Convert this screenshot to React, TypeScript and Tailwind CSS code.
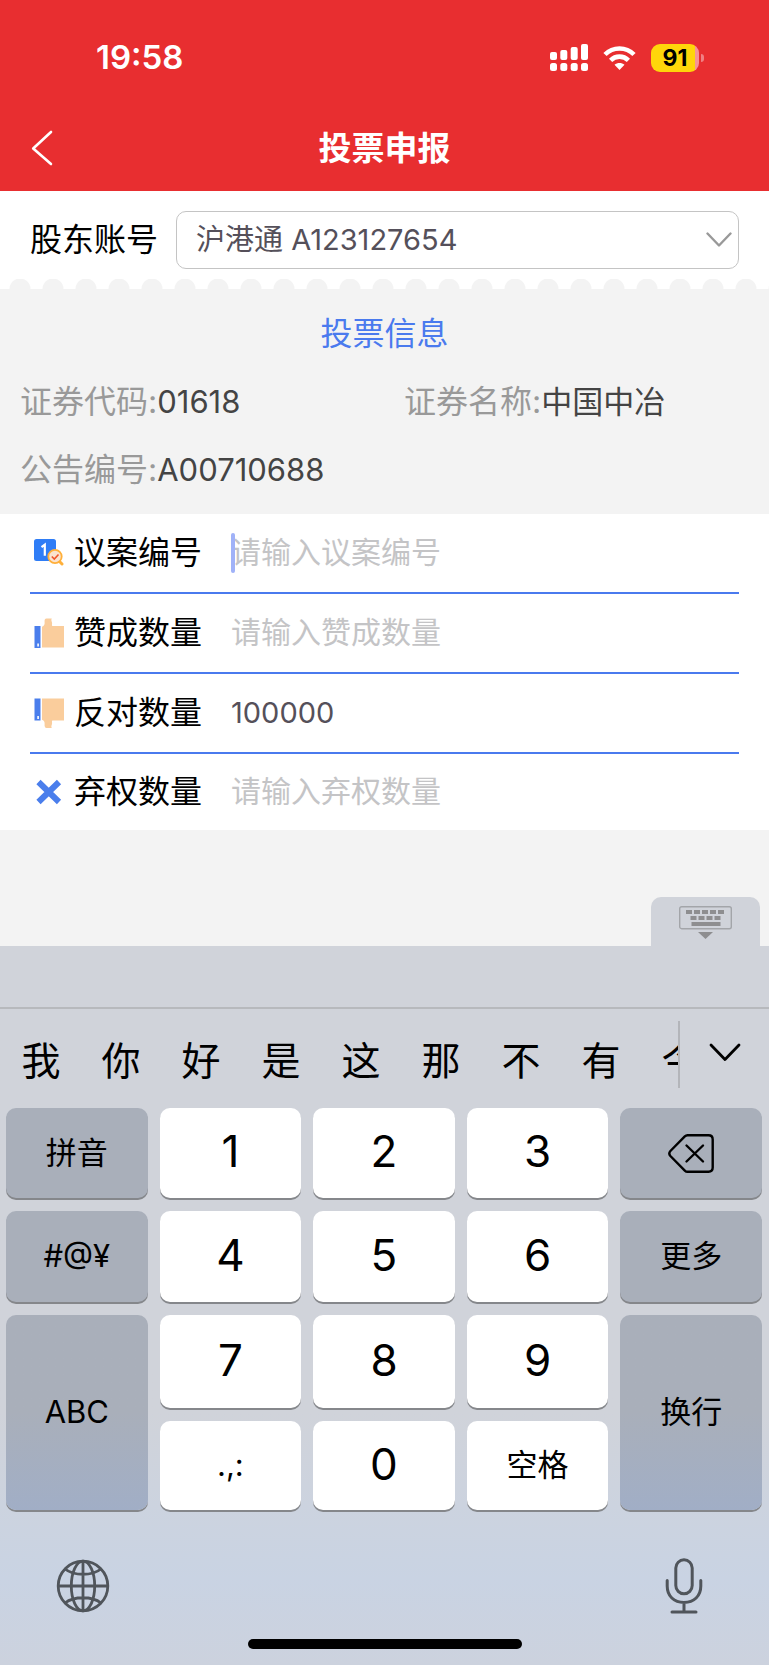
import { useState } from "react";
import type { ReactNode } from "react";
import clsx from "clsx";

function SignalIcon() {
  return (
    <svg width="38" height="28" viewBox="0 0 38 28" fill="currentColor">
      <rect x="0" y="8" width="7" height="8" rx="2" />
      <rect x="10.300" y="6" width="7" height="10" rx="2" />
      <rect x="20.700" y="3" width="7" height="13" rx="2" />
      <rect x="31" y="0" width="7" height="16" rx="2" />
      <rect x="0" y="19" width="7" height="8" rx="2.500" />
      <rect x="10.300" y="19" width="7" height="8" rx="2.500" />
      <rect x="20.700" y="19" width="7" height="8" rx="2.500" />
      <rect x="31" y="19" width="7" height="8" rx="2.500" />
    </svg>
  );
}

function WifiIcon() {
  return (
    <svg width="33" height="24" viewBox="0 0 33 24" fill="none" stroke="currentColor" strokeWidth="4.600">
      <path d="M2 8.500C10 0.400 23 0.400 31 8.500" />
      <path d="M7.600 14.300C12.600 9.400 20.400 9.400 25.400 14.300" />
      <path d="M16.500 24L11.500 18.800C14.400 16.400 18.600 16.400 21.500 18.800Z" fill="currentColor" stroke="none" />
    </svg>
  );
}

function BatteryIcon() {
  return (
    <div className="flex items-center gap-0.5">
      <div className="flex h-7 w-12 items-center justify-center rounded-[9px] bg-linear-to-r from-[#ffd60a] from-92% to-[#f69496] to-92% text-[23px] leading-7 font-bold text-black">
        91
      </div>
      <div className="h-2 w-[3px] rounded-r-full bg-[#f08083]" />
    </div>
  );
}

function BallotIcon() {
  return (
    <svg width="30" height="30" viewBox="0 0 30 30" fill="none">
      <rect x="0" y="1" width="22" height="22" rx="2.500" fill="#2f7df6" />
      <path d="M7.500 9.200L10.800 6.700V17.800" stroke="#fff" strokeWidth="2.200" />
      <path d="M24.500 22.500L28 26" stroke="#ffb03a" strokeWidth="3" strokeLinecap="round" />
      <circle cx="21" cy="18.500" r="6.700" fill="#fbe3cf" stroke="#ffb03a" strokeWidth="1.800" />
      <path d="M17.800 18.500L20.300 21L24.500 16.500" stroke="#f0552b" strokeWidth="1.600" />
    </svg>
  );
}

function ThumbUpIcon() {
  return (
    <svg width="30" height="30" viewBox="0 0 30 30">
      <rect x="0.500" y="8" width="6" height="22" fill="#4a7eec" />
      <rect x="3.300" y="25.500" width="1.600" height="3" fill="#fff" />
      <path
        d="M8 8.800C10.200 8 10.800 6.500 10.600 4.200C10.400 2.200 10.900 0.500 12.500 0.500H17.800C16.900 2 17.600 3.200 18 4.500C18.400 6 17.500 7 18.300 8H30V29.500H8Z"
        fill="#facd9c"
      />
    </svg>
  );
}

function ThumbDownIcon() {
  return (
    <svg width="30" height="30" viewBox="0 0 30 30">
      <rect x="0.500" y="0.500" width="6" height="22" fill="#4a7eec" />
      <rect x="3.300" y="18" width="1.600" height="3" fill="#fff" />
      <path
        d="M8 21.700C10.200 22.500 10.800 24 10.600 26.300C10.400 28.300 10.900 30 12.500 30H17.800C16.900 28.500 17.600 27.300 18 26C18.400 24.500 17.500 23.500 18.300 22.500H30V0.500H8Z"
        fill="#facd9c"
      />
    </svg>
  );
}

function CrossIcon() {
  return (
    <svg width="30" height="30" viewBox="0 0 30 30" stroke="#4a7eec" strokeWidth="6">
      <path d="M4.500 5L25 25M25 5L4.500 25" />
    </svg>
  );
}

function HideKeyboardIcon() {
  const top = [7, 15, 23, 31, 39];
  const middle = [12, 20, 28, 36];
  return (
    <svg width="53" height="34" viewBox="0 0 53 34" fill="#8e8e90">
      <rect x="0.700" y="0.700" width="51.600" height="22" rx="2" fill="none" stroke="#a3a5a9" strokeWidth="1.400" />
      {top.map((x) => (
        <rect key={x} x={x} y="4" width="6" height="4" />
      ))}
      {middle.map((x) => (
        <rect key={x} x={x - 0.5} y="10" width="6" height="4" />
      ))}
      <rect x="12.500" y="16" width="29" height="4" />
      <path d="M19 26H34L26.500 33Z" />
    </svg>
  );
}

function DeleteIcon() {
  return (
    <svg width="46" height="39" viewBox="0 0 46 39" fill="none" stroke="#000" strokeWidth="2.400" strokeLinecap="round" strokeLinejoin="round">
      <path d="M19.500 1.200H40.500Q44.700 1.200 44.700 5.400V33.600Q44.700 37.800 40.500 37.800H19.500Q18 37.800 16.800 36.600L2.400 22Q0.200 19.500 2.400 17L16.800 2.400Q18 1.200 19.500 1.200Z" />
      <path d="M18.500 11.500L35 27.500M35 11.500L18.500 27.500" />
    </svg>
  );
}

function GlobeIcon() {
  return (
    <svg width="54" height="54" viewBox="0 0 54 54" fill="none" stroke="#50555b" strokeWidth="2.800">
      <circle cx="27" cy="27" r="24.800" />
      <ellipse cx="27" cy="27" rx="11.700" ry="24.800" />
      <path d="M27 2V52M2 27H52M9 10C18 17 36 17 45 10M9 44C18 37 36 37 45 44" />
    </svg>
  );
}

function MicIcon() {
  return (
    <svg width="38" height="56" viewBox="0 0 38 56" fill="none" stroke="#50555b" strokeWidth="3" strokeLinecap="round">
      <rect x="10.800" y="1.800" width="16.400" height="34" rx="8.200" />
      <path d="M2.200 22.500V28C2.200 38 9 44.500 19 44.500S35.800 38 35.800 28V22.500M19 44.500V54M7 54H31" />
    </svg>
  );
}

type RowProps = {
  id: string;
  icon: ReactNode;
  label: string;
  value: string;
  onChange: (value: string) => void;
  active?: boolean;
};

function FormRow({ id, icon, label, value, onChange, active }: RowProps) {
  return (
    <div className="flex h-20 items-center border-b-2 border-[#4a7aee] pl-1 last:h-[76px] last:border-b-0">
      {icon}
      <label htmlFor={id} className="ml-2.5 w-[157px] text-[32px] leading-10 text-black">
        {label}
      </label>
      <div className="relative flex-1">
        {active && <span className="absolute inset-y-0 left-0 w-1 rounded-full bg-[#a0b2f8]" />}
        <input
          id={id}
          value={value}
          onChange={(e) => onChange(e.target.value)}
          placeholder={`请输入${label}`}
          className="block h-10 w-full bg-transparent text-[29px] leading-10 text-[#55505a] outline-none placeholder:text-[30px] placeholder:text-[#c4c4c6]"
        />
      </div>
    </div>
  );
}

function InfoItem({ label, value }: { label: string; value: string }) {
  return (
    <div className="flex">
      <dt className="text-[#999]">{label}:</dt>
      <dd className="text-[31px] text-[#444]">{value}</dd>
    </div>
  );
}

type KeyProps = {
  children: ReactNode;
  kind?: "digit" | "text" | "side";
  tall?: boolean;
  label?: string;
};

function Key({ children, kind = "digit", tall, label }: KeyProps) {
  return (
    <button
      type="button"
      aria-label={label}
      className={clsx(
        "flex items-center justify-center rounded-[10px] text-black shadow-[0_2px_0_#85878b]",
        kind === "digit" && "bg-white pb-1 text-[44px]",
        kind === "text" && "bg-white text-[31px]",
        kind === "side" && "text-[31px]",
        kind === "side" && !tall && "bg-[#a9afba]",
        tall && "row-span-2 bg-linear-to-b from-[#a9afba] from-50% to-[#a1aec6]"
      )}
    >
      {children}
    </button>
  );
}

const candidates = ["我", "你", "好", "是", "这", "那", "不", "有", "今"];

export default function App() {
  const [account, setAccount] = useState("A123127654");
  const [form, setForm] = useState({
    proposal: "",
    agree: "",
    against: "100000",
    abstain: "",
  });

  const update = (field: keyof typeof form) => (value: string) =>
    setForm((prev) => ({ ...prev, [field]: value }));

  return (
    <div className="flex min-h-screen flex-col bg-[#f3f3f3] font-[Inter,'Noto_Sans_CJK_SC',sans-serif]">
      <header className="bg-[#e82e30] text-white">
        <div className="flex h-[115px] items-center justify-between pr-[65px] pl-24">
          <span className="text-[33px] font-semibold">19:58</span>
          <div className="flex items-center gap-[15px]">
            <SignalIcon />
            <WifiIcon />
            <BatteryIcon />
          </div>
        </div>
        <div className="grid h-[76px] grid-cols-[1fr_auto_1fr] items-start px-[31px]">
          <button type="button" aria-label="返回" className="flex h-[66px] w-12 items-center">
            <svg width="22" height="36" viewBox="0 0 22 36" fill="none" stroke="currentColor" strokeWidth="2.600" strokeLinecap="round" strokeLinejoin="round">
              <path d="M20 2L2.200 18.500L20 34" />
            </svg>
          </button>
          <h1 className="text-[33px] leading-[66px] font-bold">投票申报</h1>
        </div>
      </header>

      <div className="flex h-22 items-center bg-white px-[30px] pt-2.5">
        <label htmlFor="account" className="w-[146px] shrink-0 text-[32px] text-black">
          股东账号
        </label>
        <div className="relative flex-1">
          <select
            id="account"
            value={account}
            onChange={(e) => setAccount(e.target.value)}
            className="block h-[58px] w-full appearance-none rounded-[10px] border border-[#c4c4c4] bg-white pl-[19px] text-[29px] text-[#55505a]"
          >
            <option value="A123127654">沪港通 A123127654</option>
          </select>
          <svg width="26" height="16" viewBox="0 0 26 16" fill="none" stroke="#999" strokeWidth="2.400" strokeLinecap="round" strokeLinejoin="round" className="pointer-events-none absolute top-[21px] right-[7px]">
            <path d="M1.500 1.500L13 13.500L24.500 1.500" />
          </svg>
        </div>
      </div>
      <div className="h-2.5 bg-white bg-[radial-gradient(circle_at_20px_10px,#f3f3f3_10px,transparent_11px)] bg-[length:33px_10px] bg-repeat-x" />

      <section className="h-[225px] px-5 pt-[21px] text-[32px] leading-12">
        <h2 className="text-center text-[#4a7aee]">投票信息</h2>
        <dl className="mt-5 grid grid-cols-[384px_1fr] gap-y-5">
          <InfoItem label="证券代码" value="01618" />
          <InfoItem label="证券名称" value="中国中冶" />
          <InfoItem label="公告编号" value="A00710688" />
        </dl>
      </section>

      <form className="bg-white px-[30px]">
        <FormRow id="proposal" icon={<BallotIcon />} label="议案编号" value={form.proposal} onChange={update("proposal")} active />
        <FormRow id="agree" icon={<ThumbUpIcon />} label="赞成数量" value={form.agree} onChange={update("agree")} />
        <FormRow id="against" icon={<ThumbDownIcon />} label="反对数量" value={form.against} onChange={update("against")} />
        <FormRow id="abstain" icon={<CrossIcon />} label="弃权数量" value={form.abstain} onChange={update("abstain")} />
      </form>

      <div className="flex flex-1 items-end justify-end px-[9px]">
        <button type="button" aria-label="收起键盘" className="flex h-[49px] w-[109px] justify-center rounded-t-[10px] bg-[#d0d3da] pt-[9px]">
          <HideKeyboardIcon />
        </button>
      </div>

      {/* 键盘 */}
      <div className="bg-linear-to-b from-[#d0d3da] from-65% via-[#c9d3e3] via-88% to-[#ccd2de]">
        <div className="h-[63px] border-b-2 border-[#b7b9bd]" />
        <div className="flex h-[99px] items-start pt-3">
          <div className="flex h-[67px] flex-1 overflow-hidden border-r-2 border-[#b3b5ba]">
            {candidates.map((word) => (
              <button key={word} type="button" className="w-20 shrink-0 pt-3 pl-0.5 text-[39px] leading-14 text-black">
                {word}
              </button>
            ))}
          </div>
          <button type="button" aria-label="更多候选" className="flex h-16 w-[89px] items-center justify-center">
            <svg width="32" height="20" viewBox="0 0 32 20" fill="none" stroke="#000" strokeWidth="2.800" strokeLinecap="round" strokeLinejoin="round">
              <path d="M2 2L16 16.500L30 2" />
            </svg>
          </button>
        </div>

        <div className="grid grid-cols-5 grid-rows-[90px_91px_93px_89px] gap-x-3 gap-y-[13px] pr-[7px] pl-1.5">
          <Key kind="side">拼音</Key>
          <Key>1</Key>
          <Key>2</Key>
          <Key>3</Key>
          <Key kind="side" label="删除">
            <DeleteIcon />
          </Key>
          <Key kind="side">#@¥</Key>
          <Key>4</Key>
          <Key>5</Key>
          <Key>6</Key>
          <Key kind="side">更多</Key>
          <Key kind="side" tall>
            ABC
          </Key>
          <Key>7</Key>
          <Key>8</Key>
          <Key>9</Key>
          <Key kind="side" tall>
            换行
          </Key>
          <Key kind="text">.,:</Key>
          <Key>0</Key>
          <Key kind="text">空格</Key>
        </div>

        <div className="flex h-[155px] flex-col justify-between pt-12 pb-4">
          <div className="flex items-center justify-between pr-[66px] pl-14">
            <button type="button" aria-label="切换键盘">
              <GlobeIcon />
            </button>
            <button type="button" aria-label="语音输入">
              <MicIcon />
            </button>
          </div>
          <div className="mx-auto h-2.5 w-[274px] rounded-full bg-black" />
        </div>
      </div>
    </div>
  );
}
